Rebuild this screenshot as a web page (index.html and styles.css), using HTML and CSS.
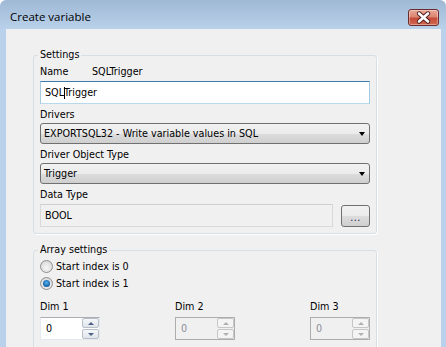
FILE: index.html
```html
<!DOCTYPE html>
<html>
<head>
  <meta charset="UTF-8" />
  <title>Create variable</title>
  <link rel="stylesheet" href="styles.css">
</head>
<body>
  <div class="window">
    <div class="titlebar">
      <span class="title">Create variable</span>
      <span class="close">
        <svg width="31" height="17" viewBox="0 0 31 17">
          <path d="M11 4.5 L20 12.5 M20 4.5 L11 12.5" stroke="#4a1d1d" stroke-width="4.4" stroke-linecap="round" />
          <path d="M11 4.5 L20 12.5 M20 4.5 L11 12.5" stroke="#ffffff" stroke-width="2.6" stroke-linecap="round" />
        </svg>
      </span>
    </div>

    <div class="client">
      <!-- Settings group -->
      <fieldset class="group">
        <legend>Settings</legend>
        <div class="name-row">
          <span class="name-label">Name</span>
          <span>SQLTrigger</span>
        </div>
        <div class="textbox focused">SQL<span class="caret"></span>Trigger</div>

        <div class="label">Drivers</div>
        <div class="combo">
          <span>EXPORTSQL32 - Write variable values in SQL</span>
          <span class="arrow"></span>
        </div>

        <div class="label">Driver Object Type</div>
        <div class="combo">
          <span>Trigger</span>
          <span class="arrow"></span>
        </div>

        <div class="label">Data Type</div>
        <div class="type-row">
          <div class="textbox readonly">BOOL</div>
          <div class="dots-btn">...</div>
        </div>
      </fieldset>

      <!-- Array settings group -->
      <fieldset class="group array">
        <legend>Array settings</legend>
        <div class="radio-row"><span class="radio"></span>Start index is 0</div>
        <div class="radio-row"><span class="radio checked"></span>Start index is 1</div>

        <div class="dims">
          <div class="dim">
            <div class="label">Dim 1</div>
            <div class="spin">
              <span class="spin-value">0</span>
              <span class="spin-btns"><span class="up"></span><span class="down"></span></span>
            </div>
          </div>
          <div class="dim">
            <div class="label">Dim 2</div>
            <div class="spin disabled">
              <span class="spin-value">0</span>
              <span class="spin-btns"><span class="up"></span><span class="down"></span></span>
            </div>
          </div>
          <div class="dim">
            <div class="label">Dim 3</div>
            <div class="spin disabled">
              <span class="spin-value">0</span>
              <span class="spin-btns"><span class="up"></span><span class="down"></span></span>
            </div>
          </div>
        </div>
      </fieldset>
    </div>
  </div>
</body>
</html>
```

FILE: styles.css
```css
html,
body {
  margin: 0;
  height: 100%;
  overflow: hidden;
}

body {
  font-family: 'DejaVu Sans Condensed', 'Liberation Sans', sans-serif;
  font-size: 10.7px;
  color: #000;
}

.window {
  height: 100%;
  display: flex;
  flex-direction: column;
  background: linear-gradient(#9fb8d4 0, #b9d1ea 29px, #b9d1ea 100%);
  border-radius: 6px 6px 0 0;
}

.titlebar {
  height: 29px;
  display: flex;
  justify-content: space-between;
  align-items: flex-start;
  flex-shrink: 0;
}

.title {
  font-family: 'Open Sans', 'Liberation Sans', sans-serif;
  font-size: 11.5px;
  line-height: 14px;
  padding: 10px 0 0 10px;
}

.close {
  margin: 9px 7px 0 0;
  width: 31px;
  height: 17px;
  box-sizing: border-box;
  border: 1px solid #6a2c2c;
  border-radius: 3px;
  background: linear-gradient(#eaa898 0%, #dc8670 45%, #c64a3a 55%, #d06a50 100%);
  box-shadow: inset 0 0 0 1px rgba(255, 255, 255, 0.35);
  display: flex;
  align-items: center;
  justify-content: center;
}

.close svg {
  display: block;
  margin: -1px;
}

.client {
  flex: 1;
  margin: 0 5px 0 6px;
  background: #f0f0f0;
  padding: 19px 0 0 27px;
  overflow: hidden;
}

.group {
  width: 344px;
  box-sizing: border-box;
  margin: 0;
  padding: 0 6px 6px 6px;
  border: 1px solid #d5dfe5;
  border-radius: 3px;
  box-shadow: 1px 1px 0 #fff;
  min-inline-size: 0;
}

.group legend {
  padding: 0 2px;
  margin-left: -2px;
  line-height: 14px;
}

.array {
  margin-top: 9px;
  padding-bottom: 10px;
}

.label {
  line-height: 14px;
  margin-top: 4px;
}

.name-row {
  display: flex;
  line-height: 14px;
  margin-top: 3px;
}

.name-label {
  width: 52px;
}

.textbox {
  height: 23px;
  box-sizing: border-box;
  padding-left: 4px;
  display: flex;
  align-items: center;
  margin-top: 2px;
  background: #fff;
}

.textbox.focused {
  border: 1px solid #a4c9e3;
  border-top-color: #3d7bad;
  border-bottom-color: #b7d9ed;
}

.caret {
  width: 1px;
  height: 12px;
  background: #000;
  margin: 0 -1px 0 0;
}

.combo {
  height: 21px;
  box-sizing: border-box;
  margin-top: 1px;
  border: 1px solid #707070;
  border-radius: 3px;
  background: linear-gradient(#f2f2f2 0%, #ebebeb 50%, #dddddd 51%, #cfcfcf 100%);
  display: flex;
  align-items: center;
  justify-content: space-between;
  padding: 0 4px 0 3px;
}

.arrow {
  width: 0;
  height: 0;
  border-left: 3.5px solid transparent;
  border-right: 3.5px solid transparent;
  border-top: 4px solid #000;
}

.type-row {
  display: flex;
  align-items: flex-start;
  margin-top: 2px;
}

.textbox.readonly {
  width: 293px;
  margin-top: 0;
  background: #f0f0f0;
  border: 1px solid #d9d9d9;
  border-top-color: #cfcfcf;
}

.dots-btn {
  width: 29px;
  height: 22px;
  box-sizing: border-box;
  margin: 1px 0 0 8px;
  border: 1px solid #707070;
  border-radius: 3px;
  background: linear-gradient(#f2f2f2 0%, #ebebeb 50%, #dddddd 51%, #cfcfcf 100%);
  text-align: center;
  line-height: 24px;
  color: #23234a;
  letter-spacing: 0.5px;
}

.radio-row {
  display: flex;
  align-items: center;
  height: 17px;
  gap: 3px;
}

.radio-row:first-of-type {
  margin-top: 1px;
}

.radio {
  width: 13px;
  height: 13px;
  box-sizing: border-box;
  border-radius: 50%;
  border: 1px solid #8e8f8f;
  background: radial-gradient(circle at 50% 60%, #f6f6f6 0, #e0e0e0 60%, #c9c9c9 100%);
  display: flex;
  align-items: center;
  justify-content: center;
}

.radio.checked::after {
  content: '';
  width: 7px;
  height: 7px;
  border-radius: 50%;
  background: radial-gradient(circle at 50% 40%, #5cb6f0 0, #1d6fb6 55%, #10406f 100%);
}

.dims {
  display: grid;
  grid-template-columns: 135px 135px 60px;
  margin-top: 4px;
}

.dim .label {
  margin-top: 4px;
}

.spin {
  width: 60px;
  height: 23px;
  box-sizing: border-box;
  margin-top: 3px;
  border: 1px solid #e3e9ef;
  border-top-color: #abadb3;
  background: #fff;
  display: flex;
  justify-content: space-between;
  align-items: stretch;
}

.spin-value {
  padding-left: 5px;
  display: flex;
  align-items: center;
}

.spin-btns {
  width: 17px;
  display: flex;
  flex-direction: column;
  gap: 1px;
}

.spin-btns span {
  flex: 1;
  border: 1px solid #b8bfc8;
  border-radius: 2px;
  background: linear-gradient(#f5f7f9, #dfe4ea);
  display: flex;
  align-items: center;
  justify-content: center;
}

.spin-btns .up::after,
.spin-btns .down::after {
  content: '';
  width: 0;
  height: 0;
  border-left: 3px solid transparent;
  border-right: 3px solid transparent;
}

.spin-btns .up::after {
  border-bottom: 3px solid #4d6185;
}

.spin-btns .down::after {
  border-top: 3px solid #4d6185;
}

.spin.disabled {
  background: #f0f0f0;
  border-color: #adadad;
  color: #8d8d9a;
}

.spin.disabled .spin-btns span {
  border-color: #c6c6c6;
  background: #f4f4f4;
}

.spin.disabled .spin-btns .up::after {
  border-bottom-color: #b0b0b0;
}

.spin.disabled .spin-btns .down::after {
  border-top-color: #b0b0b0;
}
```
